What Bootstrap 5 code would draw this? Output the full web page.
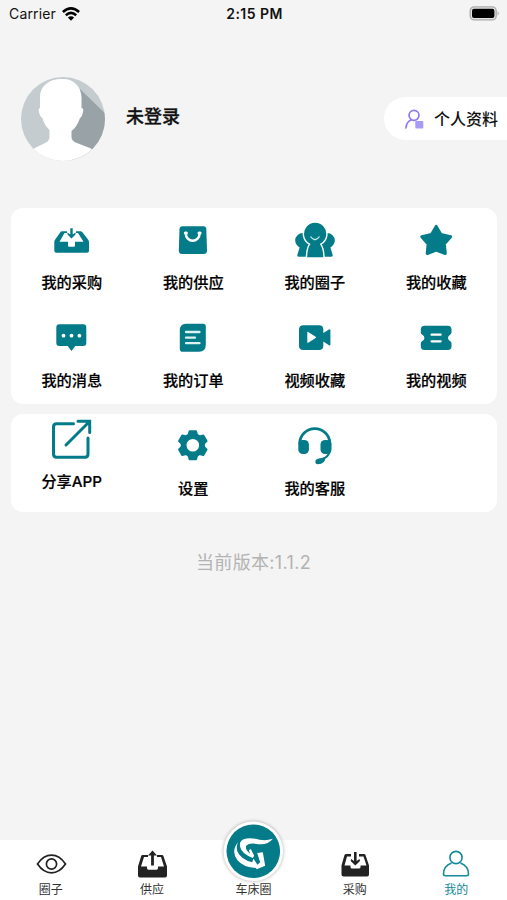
<!DOCTYPE html>
<html lang="zh-CN">
<head>
<meta charset="utf-8">
<meta name="viewport" content="width=device-width, initial-scale=1">
<title>我的</title>
<link href="https://cdn.jsdelivr.net/npm/bootstrap@5.3.0/dist/css/bootstrap.min.css" rel="stylesheet">
<style>
body{background:#f4f4f4;color:#111;font-family:Inter,"Noto Sans CJK SC",sans-serif;--teal:#047b89}
.screen{height:900px;overflow:hidden}
.statusbar{height:28px;padding:0 7px 0 9px;font-size:14px;line-height:28px}
.statusbar .clock{font-weight:600;font-size:14px;letter-spacing:.45px}
.statusbar .side{width:120px}
.carrier{letter-spacing:.15px}
.profile{height:43px;margin-top:69px}
.avatar{margin-left:20px;width:86px;height:86px}
.username{font-size:18px;font-weight:500;margin-left:20px;line-height:26px;margin-bottom:3px;-webkit-text-stroke:.3px}
.info-pill{width:123px;height:43px;background:#fff;border-radius:22px 0 0 22px;padding-left:19px;font-size:16px;font-weight:500;white-space:nowrap}
.info-pill svg{margin-right:9px}
.panel{background:#fff;border-radius:12px;margin:0 10px 0 11px}
.panel-main{margin-top:68px}
.panel-more{margin-top:10px}
.tile{height:98px;padding-top:8px;font-size:15.2px;font-weight:500;line-height:20px;color:#000;-webkit-text-stroke:.2px}
.tile svg{margin-bottom:9px;color:var(--teal)}
.tile-raised{padding-top:1px}
.version{font-size:18px;line-height:26px;color:#b3b3b3;margin-top:38px;letter-spacing:.35px}
.tabs{height:60px;background:#fff;font-size:12px;color:#333}
.tab-item{padding-top:8px;line-height:18px}
.tab-item svg{margin-bottom:1px}
.tab-active{color:#16889a}
.tab-home{padding-top:0}
.tab-home svg{margin:-24px 0 -5px;position:relative}
</style>
<script src="https://cdn.jsdelivr.net/npm/bootstrap@5.3.0/dist/js/bootstrap.bundle.min.js"></script>
</head>
<body>
<div class="screen d-flex flex-column">
  <header class="statusbar d-flex justify-content-between align-items-center">
    <div class="side d-flex align-items-center"><span class="carrier">Carrier</span>
      <svg width="18" height="14" viewBox="0 0 18 14" fill="none" stroke="#000" stroke-width="2.5" style="margin-left:6px"><path d="M.9 5Q9-2.3 17.1 5"/><path d="M3.8 8.2Q9 3.600 14.200 8.200"/><path d="M9 13.700 5.900 10.600Q9 7.800 12.100 10.600Z" fill="#000" stroke="none"/></svg>
    </div>
    <div class="clock">2:15 PM</div>
    <div class="side d-flex justify-content-end">
      <svg width="31" height="16" viewBox="0 0 31 16"><rect x="1.200" y=".9" width="26" height="13" rx="4" fill="#e4e4e4" stroke="#aaa" stroke-width="1.300"/><rect x="3" y="2.700" width="22.400" height="9.400" rx="2" fill="#000"/><path d="M28.600 5.300Q31 7.500 28.600 9.700Z" fill="#aaa"/></svg>
    </div>
  </header>

  <section class="profile d-flex align-items-center">
    <svg class="avatar flex-shrink-0" viewBox="0 0 86 86">
      <defs><clipPath id="disc"><circle cx="43" cy="43" r="42"/></clipPath></defs>
      <g clip-path="url(#disc)">
        <path fill="#c4ccd0" d="M0 0h86v86H0z"/>
        <path fill="#99a3a7" d="M60 13 90 42V86H50V50Z"/>
        <path fill="#fff" d="M41 3C53 2 61 10 61.500 21V32Q64 32 63 36Q62 41 60 42Q57 51 51.500 55V61Q51.500 65 57 67L71 72.500Q76 75 78 86H6Q9 75 14 72.500L25 67Q29.500 65 29.500 61V54Q24 49 22.500 42Q20 41 19 36Q18 32 20 32V21C20 10 29 3 41 3Z"/>
      </g>
    </svg>
    <div class="username">未登录</div>
    <a class="info-pill ms-auto d-flex align-items-center text-reset text-decoration-none" href="#">
      <svg width="22" height="22" viewBox="0 0 22 22"><g fill="none" stroke="#8b7df0" stroke-width="1.700" stroke-linecap="round"><circle cx="11" cy="7.300" r="5"/><path d="M3 20Q3.300 13.800 8.200 12"/></g><rect x="12.300" y="13" width="8" height="7.500" rx=".8" fill="#a79bf8"/></svg>个人资料
    </a>
  </section>

  <section class="panel panel-main">
    <div class="row row-cols-4 g-0 text-center">
      <div class="col tile d-flex flex-column align-items-center">
        <svg width="48" height="48" viewBox="0 0 48 48" fill="currentColor"><path fill-rule="evenodd" d="M14 15.200H19V17H16.500L11.500 25.800H20V29.500Q20 30.800 21.300 30.800H25.700Q27 30.800 27 29.500V25.800H35.500L30 17H28V15.200H32.500Q33.500 15.200 34.200 16L40 23.500Q41 24.700 41 26V34.700Q41 36.700 39 36.700H8.300Q6.300 36.700 6.300 34.700V26Q6.300 24.700 7.200 23.500L12.500 16Q13 15.200 14 15.200ZM22.300 12.200H24.700V18.500L27.500 16.500V18.600L23.500 22.500 19.500 18.600V16.500L22.300 18.500Z"/></svg>我的采购</div>
      <div class="col tile d-flex flex-column align-items-center">
        <svg width="48" height="48" viewBox="0 0 48 48"><path fill="currentColor" d="M13.500 10.200H34.500Q37.200 10.200 37.300 13L38 34.500Q38 38 34.500 38H13.200Q9.800 38 9.800 34.500L10.500 13Q10.600 10.200 13.500 10.200Z"/><path d="M16.800 17.500A6.900 7.300 0 0 0 30.600 17.500" fill="none" stroke="#fff" stroke-width="2.500"/><path d="M16.300 17H17.400M30 17H31.100" stroke="#fff" stroke-width="3" stroke-linecap="round"/></svg>我的供应</div>
      <div class="col tile d-flex flex-column align-items-center">
        <svg width="48" height="48" viewBox="0 0 48 48" fill="currentColor"><path d="M12.500 17A7.500 7.500 0 0 0 4.200 24.500Q4.200 28.500 8.600 31.500L6.300 39Q6 40.800 8 40.800H40Q42 40.800 41.700 39L39.400 31.500Q43.800 28.500 43.800 24.500A7.500 7.500 0 0 0 35.500 17Z"/><path d="M18.500 28.200Q15.500 33 15.400 42H33Q33 33 29.800 28.200A11.800 11.800 0 1 0 18.500 28.200Z" stroke="#fff" stroke-width="1.400"/><path d="M19.500 20.500Q24 27 28.500 20.500" fill="none" stroke="#c9f0ee" stroke-width="1.300"/></svg>我的圈子</div>
      <div class="col tile d-flex flex-column align-items-center">
        <svg width="48" height="48" viewBox="0 0 48 48" fill="currentColor" stroke="currentColor" stroke-width="3" stroke-linejoin="round"><path d="M24.200 10.400 28.900 18.500 38.600 20.700 32.300 27.900 33.300 37.500 24.200 34 15.200 37.500 16.100 27.900 9.800 20.700 19.500 18.500Z"/></svg>我的收藏</div>
      <div class="col tile d-flex flex-column align-items-center">
        <svg width="48" height="48" viewBox="0 0 48 48" fill="currentColor"><path d="M11.300 10.200H35.300Q38.300 10.200 38.300 13.200V29Q38.300 32 35.300 32H27.300L23.500 37 19.700 32H11.300Q8.300 32 8.300 29V13.200Q8.300 10.200 11.300 10.200Z"/><g fill="#fff"><circle cx="15.500" cy="21.700" r="1.900"/><circle cx="23.500" cy="21.700" r="1.900"/><circle cx="31.400" cy="21.700" r="1.900"/></g></svg>我的消息</div>
      <div class="col tile d-flex flex-column align-items-center">
        <svg width="48" height="48" viewBox="0 0 48 48"><path fill="currentColor" d="M17 9.700H34Q36.800 9.700 36.800 12.500V30.500Q36.800 37.700 30 37.700H13.600Q10.800 37.700 10.800 34.900V16.500Q10.800 9.700 17 9.700Z"/><path d="M17 18H30.500M17 23.700H26M17 29.200H30.500" stroke="#d8f3f2" stroke-width="2.300" stroke-linecap="round"/></svg>我的订单</div>
      <div class="col tile d-flex flex-column align-items-center">
        <svg width="48" height="48" viewBox="0 0 48 48"><path fill="currentColor" d="M12.500 11.300H28Q32.300 11.300 32.300 15.600V19L38 15.500Q39.400 14.800 39.400 16.200V30.500Q39.400 32 38 31.200L32.300 27.500V31.700Q32.300 36 28 36H12.500Q8 36 8 31.700V15.600Q8 11.300 12.500 11.300Z"/><path fill="#fff" d="M16.300 18.500Q16.300 17.500 17.200 18L24.700 22.700Q25.700 23.400 24.700 24L17.200 28.700Q16.300 29.200 16.300 28.200Z"/></svg>视频收藏</div>
      <div class="col tile d-flex flex-column align-items-center">
        <svg width="48" height="48" viewBox="0 0 48 48"><path fill="currentColor" d="M12.500 11.700H35.800Q39.500 11.700 39.500 15.500V18.500Q39.500 20 38 20.700Q36 22 36 23.900T38 27.100Q39.500 27.800 39.500 29.300V32.300Q39.500 36.100 35.800 36.100H12.500Q8.800 36.100 8.800 32.300V29.300Q8.800 27.800 10.300 27.100Q12.400 26 12.400 23.900T10.300 20.700Q8.800 20 8.800 18.500V15.500Q8.800 11.700 12.500 11.700Z"/><path d="M19.500 20.700H28.700M19.500 27.300H28.700" stroke="#fff" stroke-width="2.200" stroke-linecap="round"/></svg>我的视频</div>
    </div>
  </section>

  <section class="panel panel-more">
    <div class="row row-cols-4 g-0 text-center">
      <div class="col tile tile-raised d-flex flex-column align-items-center">
        <svg width="48" height="48" viewBox="0 0 48 48" fill="none" stroke="currentColor" stroke-width="3" stroke-linecap="round"><path d="M25.500 8.700H8.500Q5.500 8.700 5.500 11.700V39Q5.500 42.300 8.500 42.300H37Q40 42.300 40 39V23M18 30 41 7M30 6.300H41.700V17.500"/></svg>分享APP</div>
      <div class="col tile d-flex flex-column align-items-center">
        <svg width="48" height="48" viewBox="0 0 48 48" fill="none" stroke="currentColor"><circle cx="23.800" cy="23.200" r="9.200" stroke-width="5.800"/><g fill="currentColor" stroke-width="2" stroke-linejoin="round"><path id="tooth" d="M19.300 14 20.600 9.200H27L28.300 14Z"/><use href="#tooth" transform="rotate(60 23.800 23.200)"/><use href="#tooth" transform="rotate(120 23.800 23.200)"/><use href="#tooth" transform="rotate(180 23.800 23.200)"/><use href="#tooth" transform="rotate(240 23.800 23.200)"/><use href="#tooth" transform="rotate(300 23.800 23.200)"/></g></svg>设置</div>
      <div class="col tile d-flex flex-column align-items-center">
        <svg width="48" height="48" viewBox="0 0 48 48" fill="none" stroke="currentColor" stroke-width="2.800"><path d="M8.700 22V21.500A15.100 14.800 0 0 1 38.900 21.500V23"/><path stroke-width="2" d="M39 29Q37.500 35 31.500 37"/><g fill="currentColor" stroke="none"><rect x="7.300" y="18" width="10.600" height="14" rx="4.600"/><rect x="29.500" y="18" width="11" height="14" rx="4.600"/><path d="M34.500 35Q34.500 42.300 26.800 42.300Q24.300 42.300 24.300 40Q24.300 36.800 29 36.300Q32.500 36 34.500 35Z"/></g></svg>我的客服</div>
    </div>
  </section>

  <p class="version text-center mb-0">当前版本:1.1.2</p>

  <nav class="tabs mt-auto row row-cols-5 g-0 text-center">
    <div class="col tab-item d-flex flex-column align-items-center">
      <svg class="flex-shrink-0" width="32" height="32" viewBox="0 0 32 32" fill="none" stroke="#222" stroke-width="1.700"><path d="M2.500 16Q8.500 7.200 16.500 7.200T30.500 16Q24.500 24.800 16.500 24.800T2.500 16Z"/><circle cx="16.500" cy="16" r="5.100"/></svg>圈子</div>
    <div class="col tab-item d-flex flex-column align-items-center">
      <svg class="flex-shrink-0" width="32" height="32" viewBox="0 0 32 32" fill="#222"><path fill-rule="evenodd" d="M6.500 7H12V9H8L5 18.500H11V20Q11 21.700 12.500 21.700H20.500Q22 21.700 22 20V18.500H28L25 9H21V7H26Q27 7 27.400 8L31 18.500V27.500Q31 29.500 29 29.500H4Q2 29.500 2 27.500V18.500L5.200 8Q5.500 7 6.500 7Z"/><path d="M16.500 2.500 21 7.500H17.900V17.500H15.100V7.500H12Z"/></svg>供应</div>
    <div class="col tab-item tab-home d-flex flex-column align-items-center">
      <svg class="flex-shrink-0" width="70" height="70" viewBox="0 0 70 70"><defs><filter id="soft" x="-20%" y="-20%" width="140%" height="140%"><feGaussianBlur stdDeviation="1.500"/></filter></defs><circle cx="35.300" cy="35.300" r="30.500" fill="#999" opacity=".55" filter="url(#soft)"/><circle cx="35.300" cy="35.300" r="29.700" fill="#fff"/><circle cx="35.300" cy="35.300" r="26.800" fill="#047b89"/><g fill="#fff" transform="translate(5.500 5) scale(.3333)"><path d="M148 53Q128 60 108 56Q80 48 62 54Q46 60 50 78Q54 98 88 111L92 104 82 84 76 88 80 98Q64 86 68 74Q76 66 95 68Q130 76 148 53Z"/><path d="M44 64Q37 76 42 92Q52 114 86 124L90 113 102 131 110 124 101 96 118 94 125 134 100 145 97 141Q60 140 42 118Q21 91 44 64Z"/></g></svg>车床圈</div>
    <div class="col tab-item d-flex flex-column align-items-center">
      <svg class="flex-shrink-0" width="32" height="32" viewBox="0 0 32 32" fill="#222"><path fill-rule="evenodd" d="M7 6H12V8.500H8L5.500 17.500H11.500V19Q11.500 20.500 13 20.500H20Q21.500 20.500 21.500 19V17.500H27.500L24.500 8.500H20V6H25Q26 6 26.500 7L30 17.500V26.500Q30 28.500 28 28.500H4.500Q2.500 28.500 2.500 26.500V17.500L5.500 7Q6 6 7 6Z"/><path d="M15 4H17.600V13L20.500 11 21 13 16.300 17.500 11.700 13 12.200 11 15 13Z"/></svg>采购</div>
    <div class="col tab-item tab-active d-flex flex-column align-items-center">
      <svg class="flex-shrink-0" width="32" height="32" viewBox="0 0 32 32" fill="none" stroke="currentColor" stroke-width="1.600"><circle cx="16" cy="9.500" r="6.100"/><path d="M11.500 15Q3.500 18 3.500 26Q3.500 27.700 5.500 27.700H26.500Q28.500 27.700 28.500 26Q28.500 18 20.500 15"/></svg>我的</div>
  </nav>
</div>
</body>
</html>
